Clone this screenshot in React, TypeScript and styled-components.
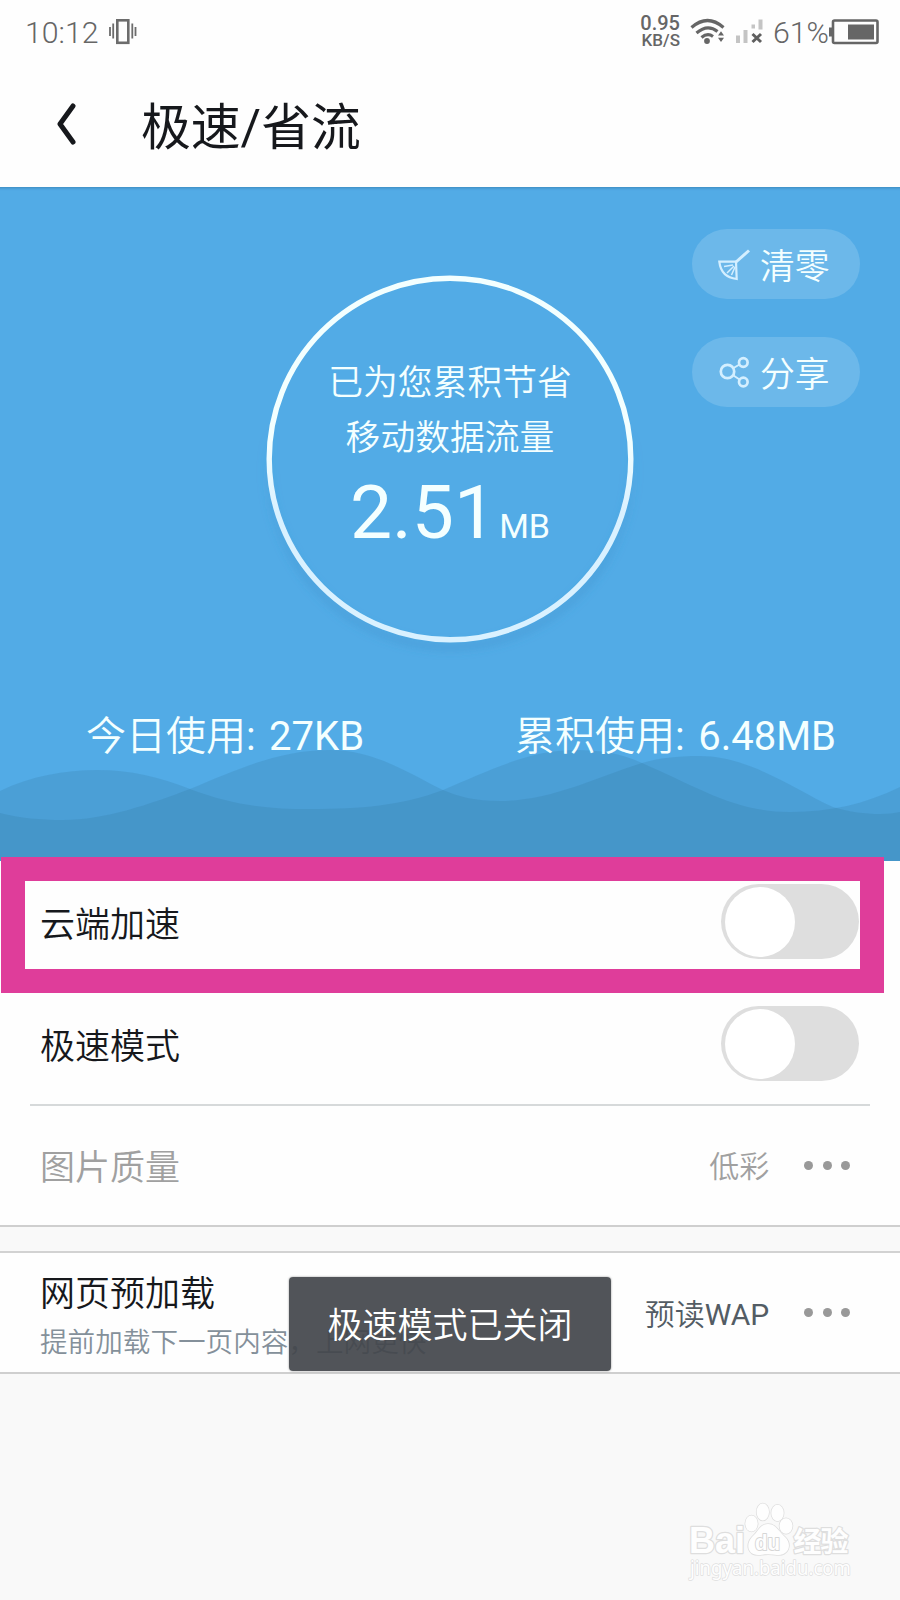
import React from 'react';
import styled, { createGlobalStyle } from 'styled-components';

const GlobalStyle = createGlobalStyle`
  * { box-sizing: border-box; }
  body { margin: 0; background: #f9f9f9; }
  svg { flex: none; }
`;

const Screen = styled.div`
  position: relative;
  display: flex;
  flex-direction: column;
  width: 900px;
  height: 1600px;
  overflow: hidden;
  background: #f9f9f9;
  font-family: Roboto, 'Noto Sans CJK SC', sans-serif;
  font-weight: 350;
  color: #16181c;
  white-space: nowrap;
`;

const StatusBar = styled.div`
  display: flex;
  align-items: center;
  justify-content: space-between;
  height: 64px;
  padding: 0 20px 0 25px;
  background: #fefefe;
  color: #666;
  font-size: 30.3px;
  line-height: 66px;
`;

const StatusGroup = styled.div`
  display: flex;
  align-items: center;
`;

const Clock = styled.span`
  width: 84px;
  padding-top: 2px;
`;

const Percent = styled.span`
  padding-top: 2px;
`;

const NetSpeed = styled.div`
  display: flex;
  flex-direction: column;
  align-items: flex-end;
  margin-right: 10px;
  font-size: 20px;
  font-weight: 500;
  line-height: 17px;
`;

const NetUnit = styled.span`
  font-size: 17px;
`;

const Signal = styled.span`
  display: flex;
  margin: 0 9px 0 10px;
`;

const Header = styled.header`
  display: flex;
  align-items: center;
  height: 123px;
  padding: 0 0 4px 55px;
  background: #fefefe;
`;

const Title = styled.h1`
  margin: 9px 0 0 65px;
  font-size: 49.8px;
  font-weight: 400;
  line-height: 72px;
`;

const Hero = styled.section`
  position: relative;
  display: flex;
  flex-direction: column;
  align-items: center;
  flex: none;
  height: 674px;
  padding-top: 88px;
  background: #52abe6;
  color: #f4ffff;
  box-shadow: inset 0 4px 3px -3px rgba(30, 90, 130, 0.4);
`;

const Waves = styled.svg`
  position: absolute;
  left: 0;
  bottom: 0;
`;

const Gauge = styled.div`
  position: relative;
  display: flex;
  flex: none;
  flex-direction: column;
  align-items: center;
  width: 368px;
  height: 368px;
  padding-top: 81px;
`;

const GaugeRing = styled.svg`
  position: absolute;
  inset: -12px;
  overflow: visible;
`;

const GaugeLine = styled.div`
  font-size: 34.8px;
  line-height: 55px;
`;

const GaugeValue = styled.div`
  display: flex;
  align-items: baseline;
  font-weight: 400;
  font-size: 75px;
  line-height: 88px;
  margin-top: 2px;
`;

const Unit = styled.span`
  margin-left: 3px;
  font-size: 34px;
`;

const Actions = styled.div`
  position: absolute;
  top: 42px;
  right: 40px;
  display: flex;
  flex-direction: column;
  gap: 38px;
`;

const Pill = styled.button`
  display: flex;
  align-items: center;
  gap: 9px;
  width: 168px;
  height: 70px;
  padding: 0 0 0 25px;
  border: 0;
  border-radius: 35px;
  background: #6cb8ea;
  color: #f4ffff;
  font: inherit;
  font-size: 34.8px;
`;

const PillText = styled.span`
  padding-bottom: 1px;
`;

const Stats = styled.div`
  position: relative;
  display: flex;
  justify-content: space-between;
  width: 100%;
  margin-top: 66px;
  padding: 0 64px 0 86px;
  font-size: 40px;
  line-height: 56px;
  word-spacing: 3.5px;
`;

const Latin = styled.span`
  font-weight: 400;
`;

const Row = styled.div<{ $edge?: boolean; $inset?: boolean; $top?: boolean }>`
  position: relative;
  display: flex;
  align-items: center;
  flex: none;
  height: ${(p) => (p.$top ? 123 : 122)}px;
  padding: 0 41px 0 40px;
  background: #fefefe;
  border-top: ${(p) => (p.$top ? '2px solid #d2d2d2' : '0')};
  border-bottom: ${(p) => (p.$edge ? '2px solid #cfcfcf' : '0')};
  ${(p) =>
    p.$inset &&
    `&::after {
      content: '';
      position: absolute;
      left: 30px;
      right: 30px;
      bottom: -1px;
      height: 2px;
      background: #d6d9da;
      z-index: 1;
    }`}
`;

const Labels = styled.div`
  flex: 1;
  min-width: 0;
  padding-top: 7px;
`;

const Label = styled.div<{ $muted?: boolean }>`
  font-size: 35px;
  line-height: 50px;
  color: ${(p) => (p.$muted ? '#a0a0a0' : '#16181c')};
`;

const Hint = styled.div`
  font-size: 27.6px;
  line-height: 40px;
  margin-top: 3px;
  color: #84909a;
`;

const Value = styled.div<{ $muted?: boolean }>`
  padding-top: 4px;
  font-size: 30px;
  line-height: 44px;
  margin-right: 35px;
  color: ${(p) => (p.$muted ? '#a0a0a0' : '#535c64')};
`;

const More = styled.div`
  display: flex;
  gap: 9.4px;
  margin-right: 9px;
`;

const Dot = styled.i`
  width: 9px;
  height: 9px;
  border-radius: 50%;
  background: #999;
`;

const Track = styled.div`
  width: 138px;
  height: 75px;
  margin-bottom: 1px;
  padding: 2.5px 4px;
  border-radius: 38px;
  background: #dedede;
`;

const Knob = styled.div`
  width: 70px;
  height: 70px;
  border-radius: 50%;
  background: #fff;
`;

const Gap = styled.div`
  flex: none;
  height: 24px;
`;

const Highlight = styled.div`
  position: absolute;
  left: 1px;
  top: 857px;
  width: 883px;
  height: 136px;
  border: 24px solid #df3d9a;
  z-index: 2;
`;

const Toast = styled.div`
  position: absolute;
  left: 289px;
  top: 1277px;
  width: 322px;
  height: 94px;
  padding-top: 1px;
  border-radius: 4px;
  background: rgba(66, 69, 75, 0.92);
  box-shadow: 0 0 2px rgba(60, 60, 60, 0.6);
  color: #fff;
  font-size: 35px;
  line-height: 97px;
  text-align: center;
  z-index: 2;
`;

const Watermark = styled.svg`
  position: absolute;
  left: 680px;
  top: 1495px;
`;

const Toggle = () => (
  <Track>
    <Knob />
  </Track>
);

const Dots = () => (
  <More>
    <Dot />
    <Dot />
    <Dot />
  </More>
);

const VibrateIcon = () => (
  <svg width="28" height="28" viewBox="0 0 28 28" fill="none" stroke="#6c6c6c">
    <rect x="8.3" y="2.3" width="11" height="22.5" strokeWidth="2.6" />
    <path d="M4.2 5.5v15M23.3 5.5v15" strokeWidth="1.8" />
    <path d="M1 9v9M26.5 9v9" strokeWidth="1.8" />
  </svg>
);

const WifiIcon = () => (
  <svg width="36" height="28" viewBox="0 0 36 28" fill="none" stroke="#666" strokeWidth="3.2">
    <path d="M1.5 9.5Q17.5 -4.5 33.5 9.5" />
    <path d="M6.5 15Q17.5 5.5 27.5 13.5" />
    <path d="M11.5 19.5Q17.5 14.5 23 18.5" />
    <circle cx="17" cy="23" r="2.9" fill="#666" stroke="none" />
    <path d="M28 17.5l3-4.2 3 4.2zM28 19.8l3 4.2 3-4.2z" fill="#666" stroke="none" />
  </svg>
);

const SignalIcon = () => (
  <svg width="28" height="28" viewBox="0 0 28 28">
    <path d="M0 17.5h4v7.5H0zM7.5 12h4v13h-4zM15.5 6.500h3.500v4h-3.500zM22.500 1.500h4v10h-4z" fill="#c4c4c4" />
    <path d="M16.5 16l8.5 8M25 16l-8.500 8" stroke="#5f5f5f" strokeWidth="3" />
  </svg>
);

const BatteryIcon = () => (
  <svg width="51" height="28" viewBox="2 0 51 28">
    <rect x="6" y="2.5" width="44.5" height="22.5" rx="1.5" fill="none" stroke="#666" strokeWidth="2.6" />
    <path d="M2 9.5h4v9h-4zM21 6.500h26v15H21z" fill="#666" />
  </svg>
);

const BroomIcon = () => (
  <svg width="34" height="34" viewBox="0 0 34 34" fill="none" stroke="#d4efff" strokeWidth="2.2">
    <path d="M19 15L32 3.5" strokeWidth="3" />
    <path d="M2.3 14.7H19L19.7 32C10 31 3.5 25 2.3 14.7Z" />
    <path d="M16 18L7 19.5M17 19L10 26M18 20L14.5 28" strokeWidth="1.5" />
  </svg>
);

const ShareIcon = () => (
  <svg width="34" height="34" viewBox="0 0 34 34" fill="none" stroke="#d4efff" strokeWidth="2.7">
    <circle cx="10.5" cy="16.5" r="6.7" />
    <circle cx="26.3" cy="7.5" r="4.3" />
    <circle cx="26.3" cy="27" r="4.3" />
    <path d="M16.5 13l6-3.5M16.5 20.5l6 4" strokeWidth="2" />
  </svg>
);

export default function App() {
  return (
    <>
      <GlobalStyle />
      <Screen>
        <StatusBar>
          <StatusGroup>
            <Clock>10:12</Clock>
            <VibrateIcon />
          </StatusGroup>
          <StatusGroup>
            <NetSpeed>
              <span>0.95</span>
              <NetUnit>KB/S</NetUnit>
            </NetSpeed>
            <WifiIcon />
            <Signal>
              <SignalIcon />
            </Signal>
            <Percent>61%</Percent>
            <BatteryIcon />
          </StatusGroup>
        </StatusBar>
        <Header>
          <svg width="21" height="44" viewBox="0 0 21 44" fill="none">
            <path d="M18 4L5 22L18 40" stroke="#16181c" strokeWidth="5" strokeLinecap="round" strokeLinejoin="round" />
          </svg>
          <Title>极速/省流</Title>
        </Header>
        <Hero>
          <Waves width="900" height="124" viewBox="0 737 900 124" fill="#306e94" fillOpacity="0.19">
            <path d="M0 791C30 776 65 770 97 770C130 770 160 777 190 789C235 806 270 809 310 809C360 809 400 806 443 790C490 770 530 750 575 750C600 750 620 753 642 763C700 788 735 812 790 812C830 812 865 804 900 787V861H0Z" />
            <path d="M0 813C20 818 40 820 63 820C105 820 150 804 190 789C240 768 280 750 330 750C375 750 410 774 443 790C460 797 475 801 500 801C550 801 595 778 642 763C660 758 675 756 700 756C750 756 795 790 833 807C850 812 865 814 880 814C888 814 894 813 900 812V861H0Z" />
          </Waves>
          <Gauge>
            <GaugeRing viewBox="-12 -12 392 392" width="392" height="392" fill="none">
              <defs>
                <linearGradient id="ring" x1="0" y1="0" x2="0" y2="1">
                  <stop offset="0.45" stopColor="#f3ffff" />
                  <stop offset="0.65" stopColor="#d9f1ff" />
                </linearGradient>
                <filter id="soft" x="-10%" y="-10%" width="120%" height="120%">
                  <feGaussianBlur stdDeviation="4" />
                </filter>
                <linearGradient id="shade" x1="0" y1="0" x2="0" y2="1">
                  <stop offset="0.4" stopColor="#3c8fc9" stopOpacity="0" />
                  <stop offset="0.8" stopColor="#3c8fc9" stopOpacity="0.4" />
                </linearGradient>
              </defs>
              <circle cx="184" cy="190" r="182" stroke="url(#shade)" strokeWidth="7" filter="url(#soft)" />
              <circle cx="184" cy="184" r="180.8" stroke="url(#ring)" strokeWidth="5.4" />
            </GaugeRing>
            <GaugeLine>已为您累积节省</GaugeLine>
            <GaugeLine>移动数据流量</GaugeLine>
            <GaugeValue>
              <span>2.51</span>
              <Unit>MB</Unit>
            </GaugeValue>
          </Gauge>
          <Actions>
            <Pill>
              <BroomIcon />
              <PillText>清零</PillText>
            </Pill>
            <Pill>
              <ShareIcon />
              <PillText>分享</PillText>
            </Pill>
          </Actions>
          <Stats>
            <span>
              今日使用<Latin>: 27KB</Latin>
            </span>
            <span>
              累积使用<Latin>: 6.48MB</Latin>
            </span>
          </Stats>
        </Hero>
        <Row>
          <Labels>
            <Label>云端加速</Label>
          </Labels>
          <Toggle />
        </Row>
        <Row $inset>
          <Labels>
            <Label>极速模式</Label>
          </Labels>
          <Toggle />
        </Row>
        <Row $edge>
          <Labels>
            <Label $muted>图片质量</Label>
          </Labels>
          <Value $muted>低彩</Value>
          <Dots />
        </Row>
        <Gap />
        <Row $top $edge>
          <Labels>
            <Label>网页预加载</Label>
            <Hint>提前加载下一页内容，上网更快</Hint>
          </Labels>
          <Value>
            预读<Latin>WAP</Latin>
          </Value>
          <Dots />
        </Row>
        <Highlight />
        <Toast>极速模式已关闭</Toast>
        <Watermark width="190" height="90" viewBox="680 1495 190 90" fill="#fefefe" stroke="#dedede" strokeWidth="1.5">
          <g paintOrder="stroke" strokeLinejoin="round">
            <text x="689" y="1553" fontFamily="Liberation Sans" fontWeight="700" fontSize="37" textLength="56" lengthAdjust="spacingAndGlyphs" strokeWidth="2.5">Bai</text>
            <ellipse cx="751.5" cy="1523.5" rx="6.2" ry="8" />
            <ellipse cx="762.8" cy="1512" rx="6.2" ry="8.5" />
            <ellipse cx="777.5" cy="1513" rx="6.2" ry="8.2" />
            <ellipse cx="786" cy="1526" rx="6.5" ry="7.8" />
            <path d="M768 1524C776 1524 779 1532 785 1537C793 1545 788 1556 777 1555C771 1554 765 1554 760 1555C748 1556 745 1545 752 1537C758 1532 760 1524 768 1524Z" />
            <text x="755" y="1550" fontFamily="Liberation Sans" fontWeight="700" fontSize="22" textLength="25" lengthAdjust="spacingAndGlyphs" stroke="#d6d6d6" strokeWidth="2">du</text>
            <text x="793.5" y="1552" fontFamily="Noto Sans CJK SC" fontWeight="700" fontSize="28" textLength="55" strokeWidth="2.5">经验</text>
            <text x="690" y="1575" fontFamily="Noto Sans" fontWeight="400" fontSize="20" textLength="161" lengthAdjust="spacingAndGlyphs" strokeWidth="1.5">jingyan.baidu.com</text>
          </g>
        </Watermark>
      </Screen>
    </>
  );
}
